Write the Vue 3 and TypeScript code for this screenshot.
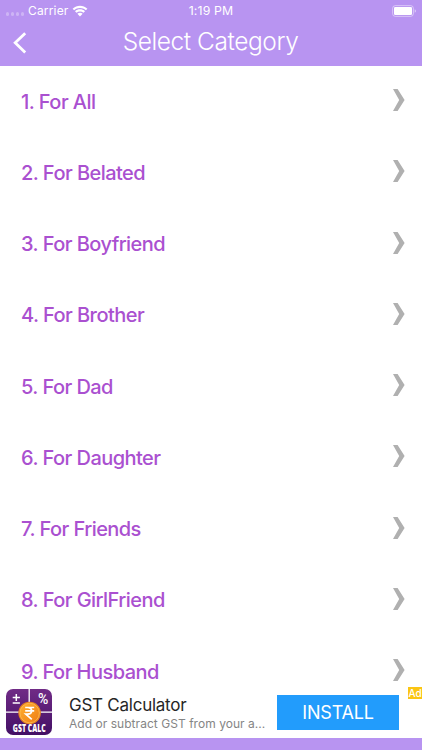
<script setup lang="ts">
interface Category {
  id: number
  name: string
}

const names: string[] = [
  'For All',
  'For Belated',
  'For Boyfriend',
  'For Brother',
  'For Dad',
  'For Daughter',
  'For Friends',
  'For GirlFriend',
  'For Husband',
]

const categories: Category[] = names.map((name, i) => ({ id: i + 1, name }))
</script>

<template>
  <div class="screen">
    <header class="header">
      <div class="status">
        <div class="status-side">
          <span class="dots"><i v-for="n in 4" :key="n"></i></span>
          <span class="carrier">Carrier</span>
          <svg class="wifi" viewBox="0 0 16 12" width="16" height="12" fill="#fff">
            <path d="M.6 3.700C4.800-.3 11.200-.3 15.400 3.700L13.900 5.300C10.500 2.200 5.500 2.200 2.100 5.300Z" />
            <path d="M3 6.200C5.800 3.700 10.200 3.700 13 6.200L11.500 7.800C9.500 6.100 6.500 6.100 4.500 7.800Z" />
            <path d="M5.400 8.700C6.900 7.500 9.100 7.500 10.600 8.700L8 11.400Z" />
          </svg>
        </div>
        <span class="time">1:19 PM</span>
        <div class="status-side end">
          <svg class="battery" viewBox="0 0 25 12" width="25" height="12">
            <rect x=".6" y=".6" width="20.800" height="10.800" rx="2.800" fill="none" stroke="#fff" stroke-opacity=".45" />
            <rect x="2" y="2" width="18" height="8" rx="1.300" fill="#fff" />
            <path d="M22.700 4.200c1.800.6 1.800 3 0 3.600z" fill="#fff" fill-opacity=".5" />
          </svg>
        </div>
      </div>
      <div class="nav">
        <svg class="back" viewBox="0 0 14 22" width="14" height="22">
          <path d="M12.200 1.300L2.200 10.800L12.200 20.500" fill="none" stroke="#fff" stroke-width="2.800" />
        </svg>
        <h1>Select Category</h1>
        <span class="spacer"></span>
      </div>
    </header>

    <main class="list">
      <div v-for="c in categories" :key="c.id" class="row">
        <span class="label">{{ c.id }}. {{ c.name }}</span>
        <svg class="chevron" viewBox="0 0 12 22" width="12" height="22">
          <path d="M0 0H4.600L11.600 11L4.600 22H0L6.200 11Z" fill="#b0b0b0" />
        </svg>
      </div>
    </main>

    <section class="ad">
      <svg class="app-icon" viewBox="0 0 46 46" width="46" height="46">
        <defs>
          <linearGradient id="tile" x1="0" y1="0" x2="0" y2="1">
            <stop offset="0" stop-color="#702b86" />
            <stop offset="1" stop-color="#430f65" />
          </linearGradient>
          <linearGradient id="coin" x1="0" y1="0" x2="1" y2="1">
            <stop offset="0" stop-color="#ffb02e" />
            <stop offset="1" stop-color="#ef7d16" />
          </linearGradient>
        </defs>
        <rect width="46" height="46" rx="7" fill="url(#tile)" />
        <path d="M23.200 0V23M0 23.200H46" stroke="#fff" stroke-width="1.300" />
        <path d="M6.700 8.500H13.900M10.300 4.900V12.100M6.700 14H13.900" stroke="#fff" stroke-width="1.500" />
        <text x="37.200" y="14.800" class="percent" text-anchor="middle">%</text>
        <circle cx="23.600" cy="24" r="11.300" fill="#e4811f" />
        <circle cx="23.600" cy="24" r="9.800" fill="url(#coin)" stroke="#ffc75b" stroke-width=".7" />
        <path d="M19.200 18.500H28.200M19.200 21.800H28.200M19.200 18.500H21.500C27 18.500 27 25.200 21.500 25.200H19.800L25.800 30.300" fill="none" stroke="#fff" stroke-width="1.700" />
        <text x="23.300" y="42.800" class="icon-name" text-anchor="middle" textLength="33" lengthAdjust="spacingAndGlyphs">GST CALC</text>
      </svg>
      <div class="ad-copy">
        <span class="ad-title">GST Calculator</span>
        <span class="ad-text">Add or subtract GST from your a...</span>
      </div>
      <button class="install">INSTALL</button>
      <span class="ad-tag">Ad</span>
    </section>
    <footer class="footer"></footer>
  </div>
</template>

<style>
body {
  margin: 0;
  overflow: hidden;
}
</style>

<style scoped>
.screen {
  width: 422px;
  height: 750px;
  display: flex;
  flex-direction: column;
  overflow: hidden;
  background: #fff;
  font-family: Inter, "Liberation Sans", sans-serif;
}
.header {
  flex: none;
  height: 65.500px;
  background: #b894f1;
  color: #fff;
}
.status {
  display: grid;
  grid-template-columns: 1fr auto 1fr;
  height: 21px;
  align-items: center;
  padding: 0 6px 0 6px;
}
.status-side {
  display: flex;
  align-items: center;
}
.end {
  justify-content: flex-end;
  margin-right: -1px;
}
.dots {
  display: flex;
  gap: 1.500px;
  margin: 7px 4px 0 0;
}
.dots i {
  width: 3.400px;
  height: 3.400px;
  border-radius: 50%;
  background: rgba(255, 255, 255, 0.3);
}
.carrier {
  font-size: 12px;
  letter-spacing: 0.150px;
}
.wifi {
  margin-left: 4px;
}
.time {
  font-size: 12.300px;
  letter-spacing: 0.150px;
}
.nav {
  height: 40px;
  display: grid;
  grid-template-columns: 14px 1fr 14px;
  align-items: center;
  padding: 0 13px;
}
.back {
  margin-top: 4px;
}
h1 {
  margin: -1px 0 0 -1px;
  text-align: center;
  font-size: 24.500px;
  font-weight: 350;
  letter-spacing: -0.430px;
  line-height: 40px;
}
.list {
  flex: 1;
  min-height: 0;
  overflow: hidden;
}
.row {
  height: 71.250px;
  display: flex;
  align-items: center;
  justify-content: space-between;
  padding: 0 17px 0 21px;
}
.label {
  padding-top: 1px;
  color: #aa50d0;
  font-size: 20px;
  font-weight: 460;
  letter-spacing: -0.550px;
  white-space: pre;
}
.chevron {
  margin-top: -2px;
}
.ad {
  flex: none;
  position: relative;
  height: 51px;
  display: flex;
  align-items: center;
  padding: 0 23px 0 6px;
  background: #fff;
}
.app-icon {
  flex: none;
  overflow: visible;
}
.percent {
  font-family: Roboto, sans-serif;
  font-size: 14px;
  font-weight: 500;
  fill: #fff;
}
.icon-name {
  font-family: "Open Sans", sans-serif;
  font-size: 10px;
  font-weight: 800;
  fill: #fff;
}
.ad-copy {
  flex: 1;
  min-width: 0;
  display: flex;
  flex-direction: column;
  margin: 2px 0 0 17px;
  white-space: nowrap;
}
.ad-title {
  font-size: 17px;
  letter-spacing: -0.250px;
  line-height: 20px;
  color: #262626;
}
.ad-text {
  font-size: 12px;
  line-height: 17px;
  color: #858585;
  letter-spacing: 0.040px;
}
.install {
  flex: none;
  width: 122px;
  height: 35px;
  border: 0;
  padding: 0;
  background: #229cfc;
  color: #fff;
  font: 400 18px/35px Inter, "Liberation Sans", sans-serif;
  letter-spacing: -0.200px;
}
.ad-tag {
  position: absolute;
  top: 0;
  right: 0;
  width: 14px;
  height: 12px;
  background: #fbc513;
  color: #fff;
  font-size: 10px;
  font-weight: 500;
  line-height: 12px;
  text-align: center;
}
.footer {
  flex: none;
  height: 12.500px;
  background: #b894f1;
}
</style>
